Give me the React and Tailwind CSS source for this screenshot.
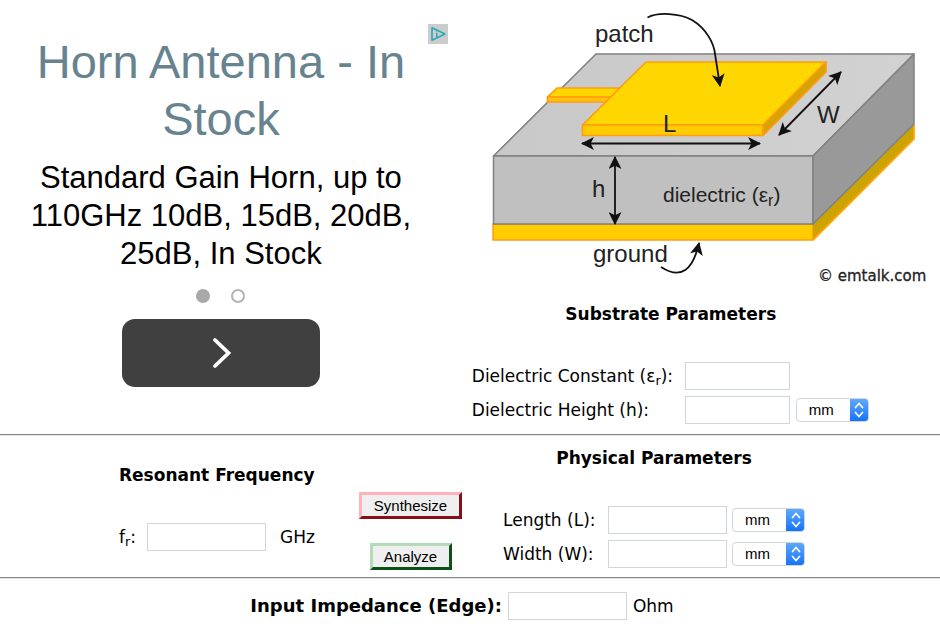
const Field = ({ id, className }) => (
  <input
    id={id}
    type="text"
    className={`h-7 border border-gray-300 bg-white px-1 ${className}`}
  />
);

const UnitSelect = ({ label }) => (
  <div className="relative h-6 w-[73px] overflow-hidden rounded border border-gray-300 bg-white">
    <select
      aria-label={label}
      defaultValue="mm"
      className="block h-full w-full appearance-none bg-transparent pl-3 font-['Liberation_Sans',sans-serif] text-[15px] leading-5"
    >
      <option>mm</option>
      <option>cm</option>
      <option>in</option>
    </select>
    <span className="pointer-events-none absolute -top-px -right-px flex h-6 w-[19px] items-center justify-center bg-gradient-to-b from-[#62abf9] to-[#0870fa]">
      <svg
        width="12"
        height="16"
        viewBox="0 0 12 16"
        fill="none"
        stroke="white"
        strokeWidth="1.7"
        strokeLinecap="round"
        strokeLinejoin="round"
      >
        <path d="M2.5 5.500 6 1.500l3.500 4M2.500 10.500 6 14.500l3.500-4" />
      </svg>
    </span>
  </div>
);

const Divider = () => (
  <hr className="h-[2px] border-t border-b border-t-[#858585] border-b-[#e4e4e4]" />
);

const Ad = () => (
  <div className="relative pt-[33px] text-center font-['Liberation_Sans',sans-serif]">
    <a
      href="#adchoices"
      aria-label="AdChoices"
      className="absolute top-6 -right-[6px] flex h-5 w-5 items-center justify-center bg-[#cccccc]"
    >
      <svg width="20" height="20" viewBox="0 0 20 20" fill="none">
        <path
          d="M4 3.800v12.400L17 10z"
          stroke="#25abb8"
          strokeWidth="1.6"
          strokeLinejoin="round"
        />
        <path d="M8.800 8.800v4.400M8.800 6.400v1.200" stroke="#25abb8" strokeWidth="1.5" />
      </svg>
    </a>
    <h1 className="text-[47px] leading-[57px] text-[#688390]">
      Horn Antenna - In
      <br />
      Stock
    </h1>
    <p className="mt-3 text-[31px] leading-[38px]">
      Standard Gain Horn, up to
      <br />
      110GHz 10dB, 15dB, 20dB,
      <br />
      25dB, In Stock
    </p>
    <div className="mt-4 flex justify-center gap-[21px]">
      <span className="h-[14px] w-[14px] rounded-full bg-[#a9a9a9]" />
      <span className="h-[14px] w-[14px] rounded-full border-2 border-[#b3b3b3]" />
    </div>
    <button
      aria-label="Next"
      className="mt-4 inline-flex h-[68px] w-[198px] items-center justify-center rounded-[13px] bg-[#404040]"
    >
      <svg
        width="24"
        height="36"
        viewBox="0 0 24 36"
        fill="none"
        stroke="white"
        strokeWidth="3.8"
      >
        <path d="M6 5 19.500 18 6 31" strokeLinecap="round" />
      </svg>
    </button>
  </div>
);

const Diagram = () => (
  <svg
    viewBox="472 0 468 290"
    className="block w-full max-w-[468px]"
    fontFamily="'Liberation Sans', sans-serif"
    fill="#222"
  >
    <defs>
      <linearGradient id="top" x1="0" y1="0" x2="1" y2="0">
        <stop offset="0" stopColor="#c8c8c8" />
        <stop offset="1" stopColor="#d2d2d2" />
      </linearGradient>
      <marker
        id="arrow"
        viewBox="0 0 12 12"
        refX="11"
        refY="6"
        markerWidth="13"
        markerHeight="13"
        markerUnits="userSpaceOnUse"
        orient="auto-start-reverse"
      >
        <path d="M0 0 12 6 0 12 3 6z" fill="#111" />
      </marker>
    </defs>

    {/* ground plane */}
    <path d="M493 224H813V240H493z" fill="#ffcc00" stroke="#ff9c14" strokeWidth="1.5" />
    <path d="M813 224 914 124V139L813 240z" fill="#cca300" />
    <path d="M914 124V139L813 240" fill="none" stroke="#ffa60d" strokeWidth="1.8" />

    {/* dielectric */}
    <g stroke="#808080" strokeWidth="1.5" strokeLinejoin="round">
      <path d="M493.500 156 596 54H914L813 156z" fill="url(#top)" />
      <path d="M493.500 156H813V224H493.500z" fill="#c0c0c0" />
      <path d="M813 156 914 54V124L813 224z" fill="#999999" />
    </g>

    {/* feed line and patch */}
    <g stroke="#ff9c14" strokeWidth="1.7" strokeLinejoin="round">
      <path d="M547.500 97 557 88H622L611 97z" fill="#ffd700" />
      <path d="M547.500 97H613L606 102H547.500z" fill="#ffc20a" />
      <path d="M582.500 125 646 62H826L763 125z" fill="#ffd700" />
      <path d="M582.500 125H763V135.500H582.500z" fill="#ffcc00" />
      <path d="M763 125 826 62V72L763 135.500z" fill="#d6a300" />
    </g>

    {/* dimension arrows */}
    <g fill="none" stroke="#111" strokeWidth="1.8">
      <path d="M582 143.500H760" markerStart="url(#arrow)" markerEnd="url(#arrow)" />
      <path d="M779 135 841 72" markerStart="url(#arrow)" markerEnd="url(#arrow)" />
      <path d="M615 157V224" markerStart="url(#arrow)" markerEnd="url(#arrow)" />
      <path
        d="M647.500 17.500C658 12 680 13 692 20C707 29 714 44 715 54L720 86"
        markerEnd="url(#arrow)"
      />
      <path d="M661 267C681 280 693 270 699 243" markerEnd="url(#arrow)" />
    </g>

    <text x="595" y="42" fontSize="24">patch</text>
    <text x="663" y="132" fontSize="24">L</text>
    <text x="817" y="123" fontSize="24">W</text>
    <text x="592" y="197" fontSize="24">h</text>
    <text x="663" y="202" fontSize="21">
      dielectric (ε
      <tspan dy="4" fontSize="16">r</tspan>
      <tspan dy="-4">)</tspan>
    </text>
    <text x="593" y="262" fontSize="24">ground</text>
    <text
      x="818"
      y="281"
      fontSize="15"
      fontFamily="'DejaVu Sans', sans-serif"
      stroke="#222"
      strokeWidth="0.3"
    >
      © emtalk.com
    </text>
  </svg>
);

const App = () => {
  return (
    <main className="min-h-screen bg-white font-['DejaVu_Sans',sans-serif] text-[17px] leading-6 text-black">
      <section className="grid grid-cols-[47%_minmax(0,1fr)] pb-[10px]">
        <Ad />

        <div className="pl-[30px]">
          <Diagram />
          <div className="mt-3 w-[398px]">
            <h2 className="text-center font-bold">Substrate Parameters</h2>
            <div className="mt-9 grid grid-cols-[213px_105px_73px] items-center gap-y-[6px]">
              <label htmlFor="constant">
                Dielectric Constant (ε<sub>r</sub>):
              </label>
              <Field id="constant" className="w-full" />
              <span />
              <label htmlFor="height">Dielectric Height (h):</label>
              <Field id="height" className="w-full" />
              <div className="pl-[6px]">
                <UnitSelect label="Height unit" />
              </div>
            </div>
          </div>
        </div>
      </section>

      <Divider />

      <section className="flex items-start pb-[7px] pl-[119px]">
        <div className="mt-[27px] w-[200px]">
          <h2 className="whitespace-nowrap font-bold">Resonant Frequency</h2>
          <div className="mt-9 flex items-center">
            <label htmlFor="frequency" className="w-7">
              f<sub>r</sub>:
            </label>
            <Field id="frequency" className="w-[119px]" />
            <span className="ml-[14px]">GHz</span>
          </div>
        </div>

        <div className="mt-14 ml-10 flex w-[103px] flex-col items-center gap-6 font-['Liberation_Sans',sans-serif] text-[15px] leading-5">
          <button className="h-[27px] w-full border-[3px] border-t-[#ffb3b8] border-r-[#8b0d18] border-b-[#8b0d18] border-l-[#ffb3b8] bg-[#efefef]">
            Synthesize
          </button>
          <button className="h-[27px] w-[82px] border-[3px] border-t-[#b4dbb8] border-r-[#0c5216] border-b-[#0c5216] border-l-[#b4dbb8] bg-[#efefef]">
            Analyze
          </button>
        </div>

        <div className="mt-[10px] ml-[41px] w-[302px]">
          <h2 className="text-center font-bold">Physical Parameters</h2>
          <div className="mt-9 grid grid-cols-[105px_119px_78px] items-center gap-y-[6px]">
            <label htmlFor="length">Length (L):</label>
            <Field id="length" className="w-full" />
            <div className="pl-[5px]">
              <UnitSelect label="Length unit" />
            </div>
            <label htmlFor="width">Width (W):</label>
            <Field id="width" className="w-full" />
            <div className="pl-[5px]">
              <UnitSelect label="Width unit" />
            </div>
          </div>
        </div>
      </section>

      <Divider />

      <section className="flex items-center justify-center gap-[6px] pt-[13px] pr-4">
        <label htmlFor="impedance" className="text-lg leading-6 font-bold">
          Input Impedance (Edge):
        </label>
        <Field id="impedance" className="w-[119px]" />
        <span>Ohm</span>
      </section>
    </main>
  );
};

export default App;
